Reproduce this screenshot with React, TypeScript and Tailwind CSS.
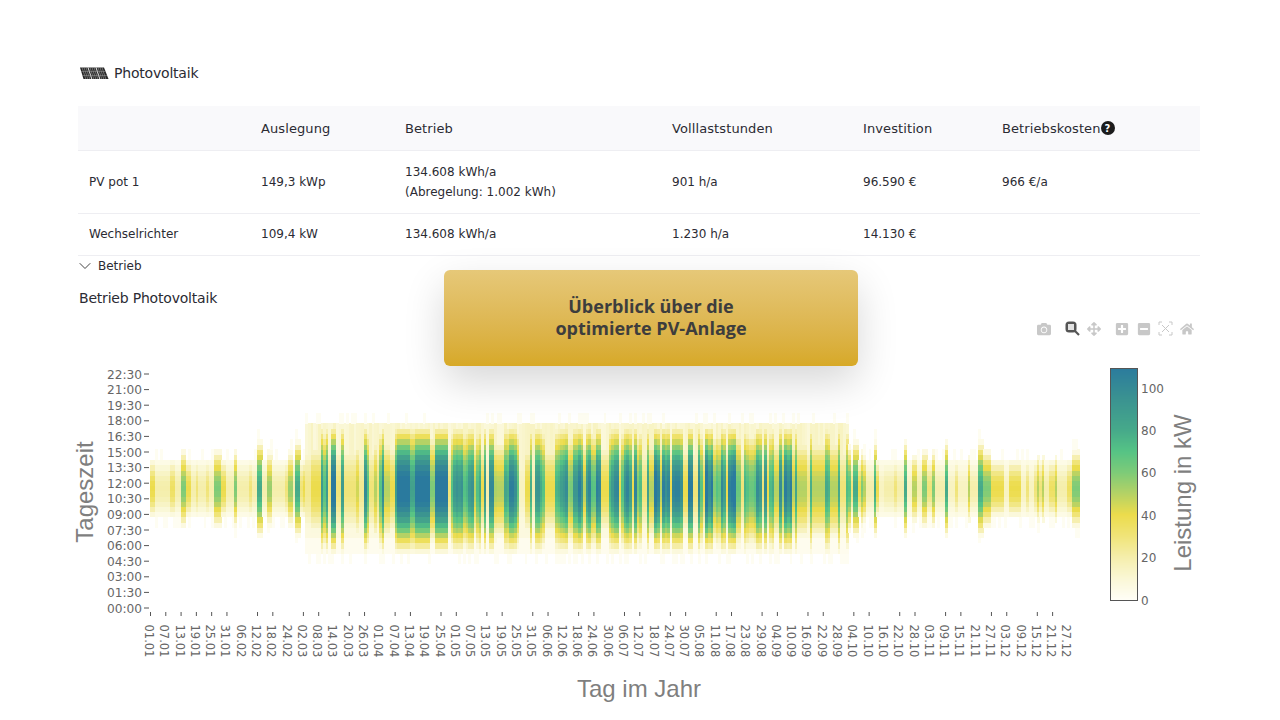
import React from 'react'
import { ChevronDown } from 'lucide-react'
import { FaCamera, FaArrowsAlt, FaPlusSquare, FaMinusSquare, FaHome } from 'react-icons/fa'

const FONT = "font-['DejaVu_Sans',sans-serif]"

// peak power per stretch of the year: [end of stretch in zoom px, kW / 10], offset is the left px of the zone
const ZONES: [number, [number, number][]][] = [
  [150, [[15, 4], [60, 2], [78, 3.5], [93, 2], [108, 6], [123, 4], [138, 2], [147, 3], [168, 2], [178, 3], [193, 2], [216, 6], [232, 4], [250, 2], [262, 6], [300, 2], [307, 3], [320, 2], [336, 8], [352, 2], [370, 5.5], [405, 2], [413, 3], [430, 5.5], [437, 2], [452, 8], [460, 3], [468, 4], [483, 2.5], [513, 4], [522, 9], [528, 7], [537, 9], [543, 3], [561, 11.5], [575, 3], [582, 9], [620, 3], [630, 4.5], [645, 2.5], [652, 10], [660, 7], [675, 3], [682, 5], [690, 3], [698, 7], [706, 10], [720, 5]]],
  [390, [[10, 4], [22, 9], [62, 11.5], [78, 8.5], [120, 11.5], [137, 6], [172, 11.5], [180, 3], [187, 8], [202, 10], [207, 8], [217, 10], [222, 6], [232, 8], [247, 10], [262, 5], [270, 8], [285, 4], [292, 9], [300, 2], [310, 10], [317, 6], [340, 5], [345, 3], [355, 9], [380, 10.5], [392, 7], [400, 1.5], [407, 10], [422, 4], [430, 9], [437, 2], [447, 10], [452, 7], [467, 8], [492, 4], [507, 8], [522, 8.5], [537, 10.5], [547, 6], [563, 9], [577, 10.5], [590, 5], [600, 10.5], [615, 7], [635, 10.5], [655, 4], [670, 8.5], [685, 10.5], [692, 4], [705, 7], [715, 10], [720, 4]]],
  [630, [[7, 10], [15, 4], [22, 10], [38, 7], [48, 3], [62, 10], [72, 5], [87, 11], [100, 5], [117, 11], [130, 4], [157, 10.5], [170, 4], [190, 11], [200, 3], [210, 10], [215, 7], [228, 4], [247, 11.5], [255, 6], [262, 8], [270, 7], [285, 10], [293, 4], [315, 11.5], [330, 7], [338, 3], [368, 7.5], [378, 8], [383, 3], [392, 10.5], [400, 3], [408, 10.5], [420, 4], [430, 8.5], [445, 5], [455, 10.5], [465, 6], [485, 10.5], [492, 5], [500, 9], [530, 5], [537, 3], [545, 8], [585, 5], [598, 8], [625, 5], [630, 8], [645, 3], [660, 7]]],
  [850, [[8, 3], [25, 8], [33, 4], [40, 6], [48, 5], [68, 2], [78, 8], [85, 4], [100, 1.5], [132, 2], [140, 3], [162, 2], [170, 8], [185, 1.5], [200, 5], [215, 2], [232, 6], [245, 3], [253, 6], [285, 2], [295, 8], [315, 1.5], [325, 3], [352, 1.5], [362, 5], [384, 2], [400, 8], [422, 6], [462, 4], [476, 1.5], [516, 4], [530, 1.5], [536, 3], [552, 1.5], [560, 3], [570, 5], [575, 3], [585, 5], [600, 2], [615, 3.5], [620, 5], [655, 2], [670, 3.5], [690, 6]]],
]

const DAY = 930 / 365
const ROW = 5.2

const peakAt = (x: number) => {
  for (const [off, segs] of ZONES) {
    if (x >= off && x < off + 240) {
      const z = (x - off) * 3
      for (const [end, v] of segs) if (z < end) return v * 10
    }
  }
  return 20
}

const STOPS: [number, number[]][] = [
  [0, [255, 254, 246]], [10, [250, 247, 213]], [20, [245, 238, 171]], [30, [240, 228, 120]], [40, [236, 220, 76]],
  [50, [180, 210, 101]], [60, [125, 203, 120]], [70, [85, 195, 133]], [80, [70, 169, 138]], [95, [58, 146, 145]], [110, [42, 122, 158]],
]

const colorOf = (v: number) => {
  for (let i = 1; i < STOPS.length; i++) {
    const [b, cb] = STOPS[i]
    if (v <= b) {
      const [a, ca] = STOPS[i - 1]
      const t = (v - a) / (b - a)
      return `rgb(${ca.map((c, k) => Math.round(c + (cb[k] - c) * t)).join(',')})`
    }
  }
  return 'rgb(42,122,158)'
}

const hash = (n: number) => {
  const s = Math.sin(n * 127.1) * 43758.5453
  return s - Math.floor(s)
}

const cells: { x: number; y: number; c: string }[] = []
for (let d = 0; d < 365; d++) {
  const x = 150 + d * DAY
  let peak = peakAt(x + DAY / 2)
  if (x > 450 && x < 848 && peak > 50) peak *= 0.86 + 0.2 * hash(d + 3)
  const summer = x >= 303 && x < 848
  const lvl = Math.min(1, Math.max(0, (peak - 40) / 40))
  const H0 = summer ? 12.6 : 9.3
  const H = summer ? H0 : H0 * (0.62 + 0.38 * lvl)
  const Hc = summer ? H0 * (0.72 + 0.28 * lvl) : H
  const topFloor = 8 + 7 * hash(d + 21)
  for (let r = 8; r < 40; r++) {
    const dr = Math.abs(r - 23)
    let v = 0
    if (dr < Hc) {
      const floor = summer ? (r > 23 ? topFloor : 7) : 5
      v = Math.max(peak * Math.cos((Math.PI / 2) * (dr / Hc)), floor)
    } else if (r > 23 && dr < H) v = topFloor
    else if (r < 23 && dr < H) v = 2.5
    else if (r > 23 && dr < H + 2 && hash(d) > 0.75) v = 1.5
    else if (r < 23 && dr < H + 1.5 && hash(d + 9) > 0.65) v = 1.2
    if (v > 0) cells.push({ x, y: 608 - r * ROW - ROW / 2, c: colorOf(Math.min(v, 110)) })
  }
}

const dateLabels: string[] = []
{
  const months = [31, 28, 31, 30, 31, 30, 31, 31, 30, 31, 30, 31]
  for (let d = 0; d < 366; d += 6) {
    let m = 0
    let rest = d
    while (rest >= months[m]) {
      rest -= months[m]
      m++
    }
    dateLabels.push(`${String(rest + 1).padStart(2, '0')}.${String(m + 1).padStart(2, '0')}`)
  }
}

const timeLabels = ['00:00', '01:30', '03:00', '04:30', '06:00', '07:30', '09:00', '10:30', '12:00', '13:30', '15:00', '16:30', '18:00', '19:30', '21:00', '22:30']

const Heatmap = () => (
  <svg width={1122} height={376} viewBox="78 344 1122 376" className="block overflow-visible">
    <g shapeRendering="crispEdges">
      {cells.map((c, i) => (
        <rect key={i} x={c.x} y={c.y} width={DAY + 0.4} height={ROW + 0.4} fill={c.c} />
      ))}
    </g>
    {timeLabels.map((t, i) => {
      const y = 608 - i * 15.6
      return (
        <g key={t}>
          <line x1={144} x2={149} y1={y} y2={y} stroke="#555" />
          <text x={142} y={y + 4.5} textAnchor="end" fontSize={12.2} fill="#666" fontFamily="'DejaVu Sans',sans-serif">{t}</text>
        </g>
      )
    })}
    {dateLabels.map((t, i) => {
      const x = 150.5 + i * 15.29
      return (
        <g key={t}>
          {(i < 6 || i % 3 !== 0) && <line x1={x} x2={x} y1={612} y2={616} stroke="#555" />}
          <text transform={`translate(${x - 5.5},624.5) rotate(90)`} fontSize={11.5} fill="#666" fontFamily="'DejaVu Sans',sans-serif">{t}</text>
        </g>
      )
    })}
    <text transform="translate(93,492) rotate(-90)" textAnchor="middle" fontSize={24} fill="#7f7f7f" fontFamily="'Liberation Sans',sans-serif">Tageszeit</text>
    <text x={639} y={697} textAnchor="middle" fontSize={24} fill="#7f7f7f" fontFamily="'Liberation Sans',sans-serif">Tag im Jahr</text>
    <text transform="translate(1191,493) rotate(-90)" textAnchor="middle" fontSize={24} fill="#7f7f7f" fontFamily="'Liberation Sans',sans-serif">Leistung in kW</text>
    <g shapeRendering="crispEdges">
      {Array.from({ length: 232 }, (_, i) => (
        <rect key={i} x={1110} y={600 - i - 1} width={27} height={1.2} fill={colorOf(i * 0.4718)} />
      ))}
      <rect x={1110.5} y={368.5} width={27} height={232} fill="none" stroke="#555" />
    </g>
    {[0, 20, 40, 60, 80, 100].map((v) => (
      <text key={v} x={1141} y={600 - v * 2.12 + 4.5} fontSize={12} fill="#666" fontFamily="'DejaVu Sans',sans-serif">{v}</text>
    ))}
  </svg>
)

const SolarIcon = () => (
  <svg width={30} height={14} viewBox="0 0 30 14" className="block">
    <path d="M1 1.5H25L29.5 13H4.5Z" fill="#262626" />
    {[3, 5, 7, 9, 11, 13, 15, 17, 19, 21, 23].map((x) => (
      <path key={x} d={`M${x} 1.5L${x + 3.8} 13`} stroke="#fff" strokeWidth={x % 8 === 1 ? 0.9 : 0.35} />
    ))}
    <path d="M2 5.5H27M3 9.5H28" stroke="#999" strokeWidth={0.5} />
  </svg>
)

const ZoomIcon = () => (
  <svg width={15} height={15} viewBox="0 0 15 15" className="block">
    <rect x={0.5} y={0.5} width={11} height={11} rx={3.5} fill="#555" />
    <rect x={3} y={3} width={6} height={6} fill="#e2e2e2" />
    <path d="M10 10L14 14" stroke="#555" strokeWidth={2.2} />
  </svg>
)

const AutoIcon = () => (
  <svg width={15} height={15} viewBox="0 0 15 15" className="block" fill="none" stroke="#c8c8c8">
    <path d="M1 4V1H4M11 1H14V4M14 11V14H11M4 14H1V11" />
    <path d="M4 4L11 11M11 4L4 11" />
  </svg>
)

const HelpIcon = () => (
  <span className="inline-flex h-[14px] w-[14px] items-center justify-center rounded-full bg-[#1c1c1c] text-[10px] font-bold text-white">?</span>
)

const cell = 'px-[11px] align-middle'
const head = 'px-[11px] pt-px text-left align-middle font-normal'

export default function App() {
  return (
    <div className={`relative h-screen overflow-hidden bg-white pl-[78px] pr-[80px] pt-[64px] text-[#2b2b33] ${FONT}`}>
      <div className="flex h-[18px] items-center gap-[5px] pl-px text-[14px] leading-[18px] tracking-[-0.2px]">
        <SolarIcon />
        <span>Photovoltaik</span>
      </div>

      <table className="mt-[24px] w-full table-fixed border-collapse text-[12px]">
        <colgroup>
          <col className="w-[172px]" />
          <col className="w-[144px]" />
          <col className="w-[267px]" />
          <col className="w-[191px]" />
          <col className="w-[139px]" />
          <col />
        </colgroup>
        <thead>
          <tr className="h-[44px] border-b border-[#eeeef2] bg-[#f9f9fb] text-[13px] tracking-[0.1px]">
            <th className={head} />
            <th className={head}>Auslegung</th>
            <th className={head}>Betrieb</th>
            <th className={head}>Volllaststunden</th>
            <th className={head}>Investition</th>
            <th className={head}>
              <span className="flex items-center">Betriebskosten<HelpIcon /></span>
            </th>
          </tr>
        </thead>
        <tbody>
          <tr className="h-[63px] border-b border-[#eeeef2]">
            <td className={cell}>PV pot 1</td>
            <td className={cell}>149,3 kWp</td>
            <td className={`${cell} leading-[20px]`}>134.608 kWh/a<br />(Abregelung: 1.002 kWh)</td>
            <td className={cell}>901 h/a</td>
            <td className={cell}>96.590 €</td>
            <td className={cell}>966 €/a</td>
          </tr>
          <tr className="h-[42px] border-b border-[#eeeef2]">
            <td className={cell}>Wechselrichter</td>
            <td className={cell}>109,4 kW</td>
            <td className={cell}>134.608 kWh/a</td>
            <td className={cell}>1.230 h/a</td>
            <td className={cell}>14.130 €</td>
            <td className={cell} />
          </tr>
        </tbody>
      </table>

      <div className="mt-px flex h-[19px] items-center text-[12px]">
        <ChevronDown size={20} strokeWidth={1.2} className="-ml-[3px] text-[#444]" />
        <span className="ml-[3px]">Betrieb</span>
      </div>
      <div className="mt-[13px] h-[18px] pl-px text-[14px] leading-[18px] tracking-[-0.2px]">Betrieb Photovoltaik</div>

      <div className="mt-[14px] flex h-[16px] items-center justify-end pr-[6px] text-[#c8c8c8]">
        <FaCamera size={14} />
        <span className="ml-[14px]"><ZoomIcon /></span>
        <FaArrowsAlt size={14} className="ml-[7px]" />
        <FaPlusSquare size={14} className="ml-[14px]" />
        <FaMinusSquare size={14} className="ml-[8px]" />
        <span className="ml-[7px]"><AutoIcon /></span>
        <FaHome size={14} className="ml-[7px]" />
      </div>

      <div className="mt-[7px]">
        <Heatmap />
      </div>

      <div className="absolute left-[444px] top-[270px] flex h-[96px] w-[414px] items-center justify-center rounded-[6px] bg-gradient-to-b from-[#e6c878] to-[#d7a926] pb-[2px] text-center font-['Open_Sans',sans-serif] text-[18px] font-bold leading-[22px] text-[#3d3d3d] shadow-[0_16px_40px_rgba(0,0,0,0.16)]">
        <span>Überblick über die<br />optimierte PV-Anlage</span>
      </div>
    </div>
  )
}
